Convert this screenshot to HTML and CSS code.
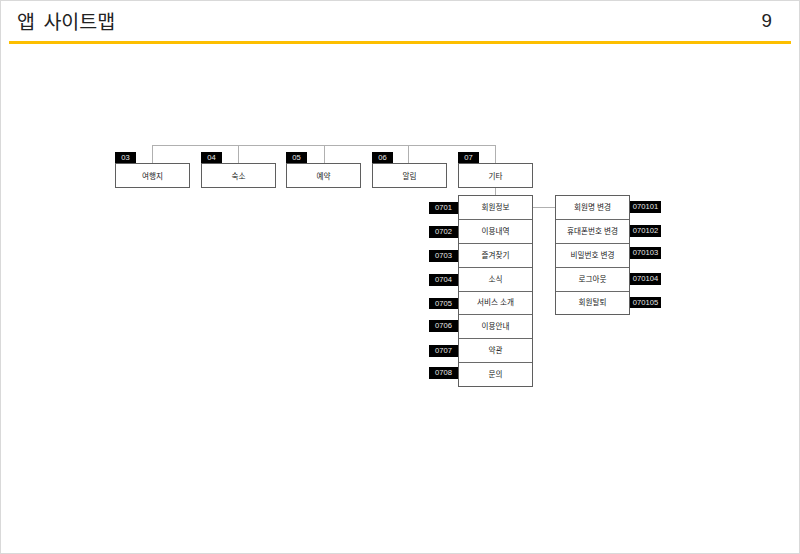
FILE: index.html
```html
<!DOCTYPE html>
<html lang="ko">
<head>
<meta charset="utf-8">
<title>앱 사이트맵</title>
<link rel="stylesheet" href="styles.css">
</head>
<body>
<div class="slide">
  <header class="header">
    <h1 class="title">앱 사이트맵</h1>
    <span class="page-num">9</span>
  </header>
  <main class="canvas">
    <div class="line bus"></div>
    <div class="line drop drop-03"></div>
    <div class="line drop drop-04"></div>
    <div class="line drop drop-05"></div>
    <div class="line drop drop-06"></div>
    <div class="line drop drop-07"></div>
    <div class="line drop stem"></div>
    <div class="line link"></div>

    <div class="node node-03"><span class="tab">03</span><div class="node-box">여행지</div></div>
    <div class="node node-04"><span class="tab">04</span><div class="node-box">숙소</div></div>
    <div class="node node-05"><span class="tab">05</span><div class="node-box">예약</div></div>
    <div class="node node-06"><span class="tab">06</span><div class="node-box">알림</div></div>
    <div class="node node-07"><span class="tab">07</span><div class="node-box">기타</div></div>

    <div class="branch branch-07">
      <div class="tags tags-left">
        <span class="tag tag-l">0701</span>
        <span class="tag tag-l">0702</span>
        <span class="tag tag-l">0703</span>
        <span class="tag tag-l">0704</span>
        <span class="tag tag-l">0705</span>
        <span class="tag tag-l up1">0706</span>
        <span class="tag tag-l">0707</span>
        <span class="tag tag-l up2">0708</span>
      </div>
      <ul class="stack">
        <li class="cell">회원정보</li>
        <li class="cell">이용내역</li>
        <li class="cell">즐겨찾기</li>
        <li class="cell">소식</li>
        <li class="cell">서비스 소개</li>
        <li class="cell">이용안내</li>
        <li class="cell">약관</li>
        <li class="cell">문의</li>
      </ul>
    </div>

    <div class="branch branch-0701">
      <ul class="stack">
        <li class="cell">회원명 변경</li>
        <li class="cell">휴대폰번호 변경</li>
        <li class="cell">비밀번호 변경</li>
        <li class="cell">로그아웃</li>
        <li class="cell">회원탈퇴</li>
      </ul>
      <div class="tags tags-right">
        <span class="tag tag-r">070101</span>
        <span class="tag tag-r">070102</span>
        <span class="tag tag-r up2">070103</span>
        <span class="tag tag-r">070104</span>
        <span class="tag tag-r">070105</span>
      </div>
    </div>
  </main>
</div>
</body>
</html>
```

FILE: styles.css
```css
* { box-sizing: border-box; }
html, body { margin: 0; padding: 0; background: #fff; }
.slide {
  width: 800px;
  height: 554px;
  border: 1px solid #d9d9d9;
  display: flex;
  flex-direction: column;
  font-family: "Noto Sans CJK KR", "Liberation Sans", sans-serif;
  color: #111;
  overflow: hidden;
}
.header {
  height: 43px;
  margin: 0 8px;
  padding: 0 19px 0 8px;
  border-bottom: 3px solid #fdbf00;
  display: flex;
  justify-content: space-between;
  align-items: center;
}
.title {
  margin: 0;
  font-size: 19.5px;
  font-weight: 400;
  word-spacing: 3px;
  line-height: 38px;
  color: #222;
}
.page-num {
  font-family: "Liberation Sans", sans-serif;
  font-size: 18.7px;
  line-height: 38px;
  color: #222;
}
.canvas { position: relative; flex: 1; }

/* canvas origin is page (1,44) */
.line { position: absolute; background: #b0b0b0; }
.bus { left: 151px; top: 101px; width: 344px; height: 1px; }
.drop { top: 101px; width: 1px; height: 18px; }
.drop-03 { left: 151px; }
.drop-04 { left: 237px; }
.drop-05 { left: 323px; }
.drop-06 { left: 407px; }
.drop-07 { left: 494px; }
.stem { left: 494px; top: 143px; height: 8px; }
.link { left: 532px; top: 163px; width: 23px; height: 1px; }

.node { position: absolute; top: 108px; width: 75px; }
.node-03 { left: 114px; }
.node-04 { left: 200px; }
.node-05 { left: 285px; }
.node-06 { left: 371px; }
.node-07 { left: 457px; }
.tab, .tag {
  display: block;
  background: #000;
  color: #e8e8e8;
  font-family: "Liberation Sans", sans-serif;
  font-size: 7.6px;
  text-align: center;
}
.tab { width: 21px; height: 11px; line-height: 12px; }
.node-box {
  height: 25px;
  border: 1px solid #5f5f5f;
  background: #fff;
  display: flex;
  align-items: center;
  justify-content: center;
  font-size: 7.6px;
  color: #222;
}

.branch { position: absolute; display: flex; align-items: flex-start; }
.branch-07 { left: 428px; top: 151px; }
.branch-0701 { left: 554px; top: 151px; }
.tags { display: flex; flex-direction: column; }
.tags-left { width: 29px; }
.tags-right { width: 31px; }
.tag { width: 100%; height: 11.9px; line-height: 12px; }
.tag-l { margin-top: 7px; margin-bottom: 5px; }
.tag-r { margin-top: 6px; margin-bottom: 6px; }
.tag-l.up1 { margin-top: 6px; margin-bottom: 6px; }
.tag-l.up2 { margin-top: 5px; }
.tag-r.up2 { margin-top: 4px; margin-bottom: 8px; }

.stack {
  list-style: none;
  margin: 0;
  padding: 0;
  border: 1px solid #5f5f5f;
  background: #fff;
}
.branch-07 .stack { width: 75px; }
.branch-0701 .stack { width: 75px; }
.cell {
  height: 23.875px;
  padding-bottom: 2px;
  border-bottom: 1px solid #6a6a6a;
  display: flex;
  align-items: center;
  justify-content: center;
  font-size: 7.6px;
  color: #222;
  white-space: nowrap;
}
.cell:last-child { border-bottom: 0; height: 22.875px; }
```
